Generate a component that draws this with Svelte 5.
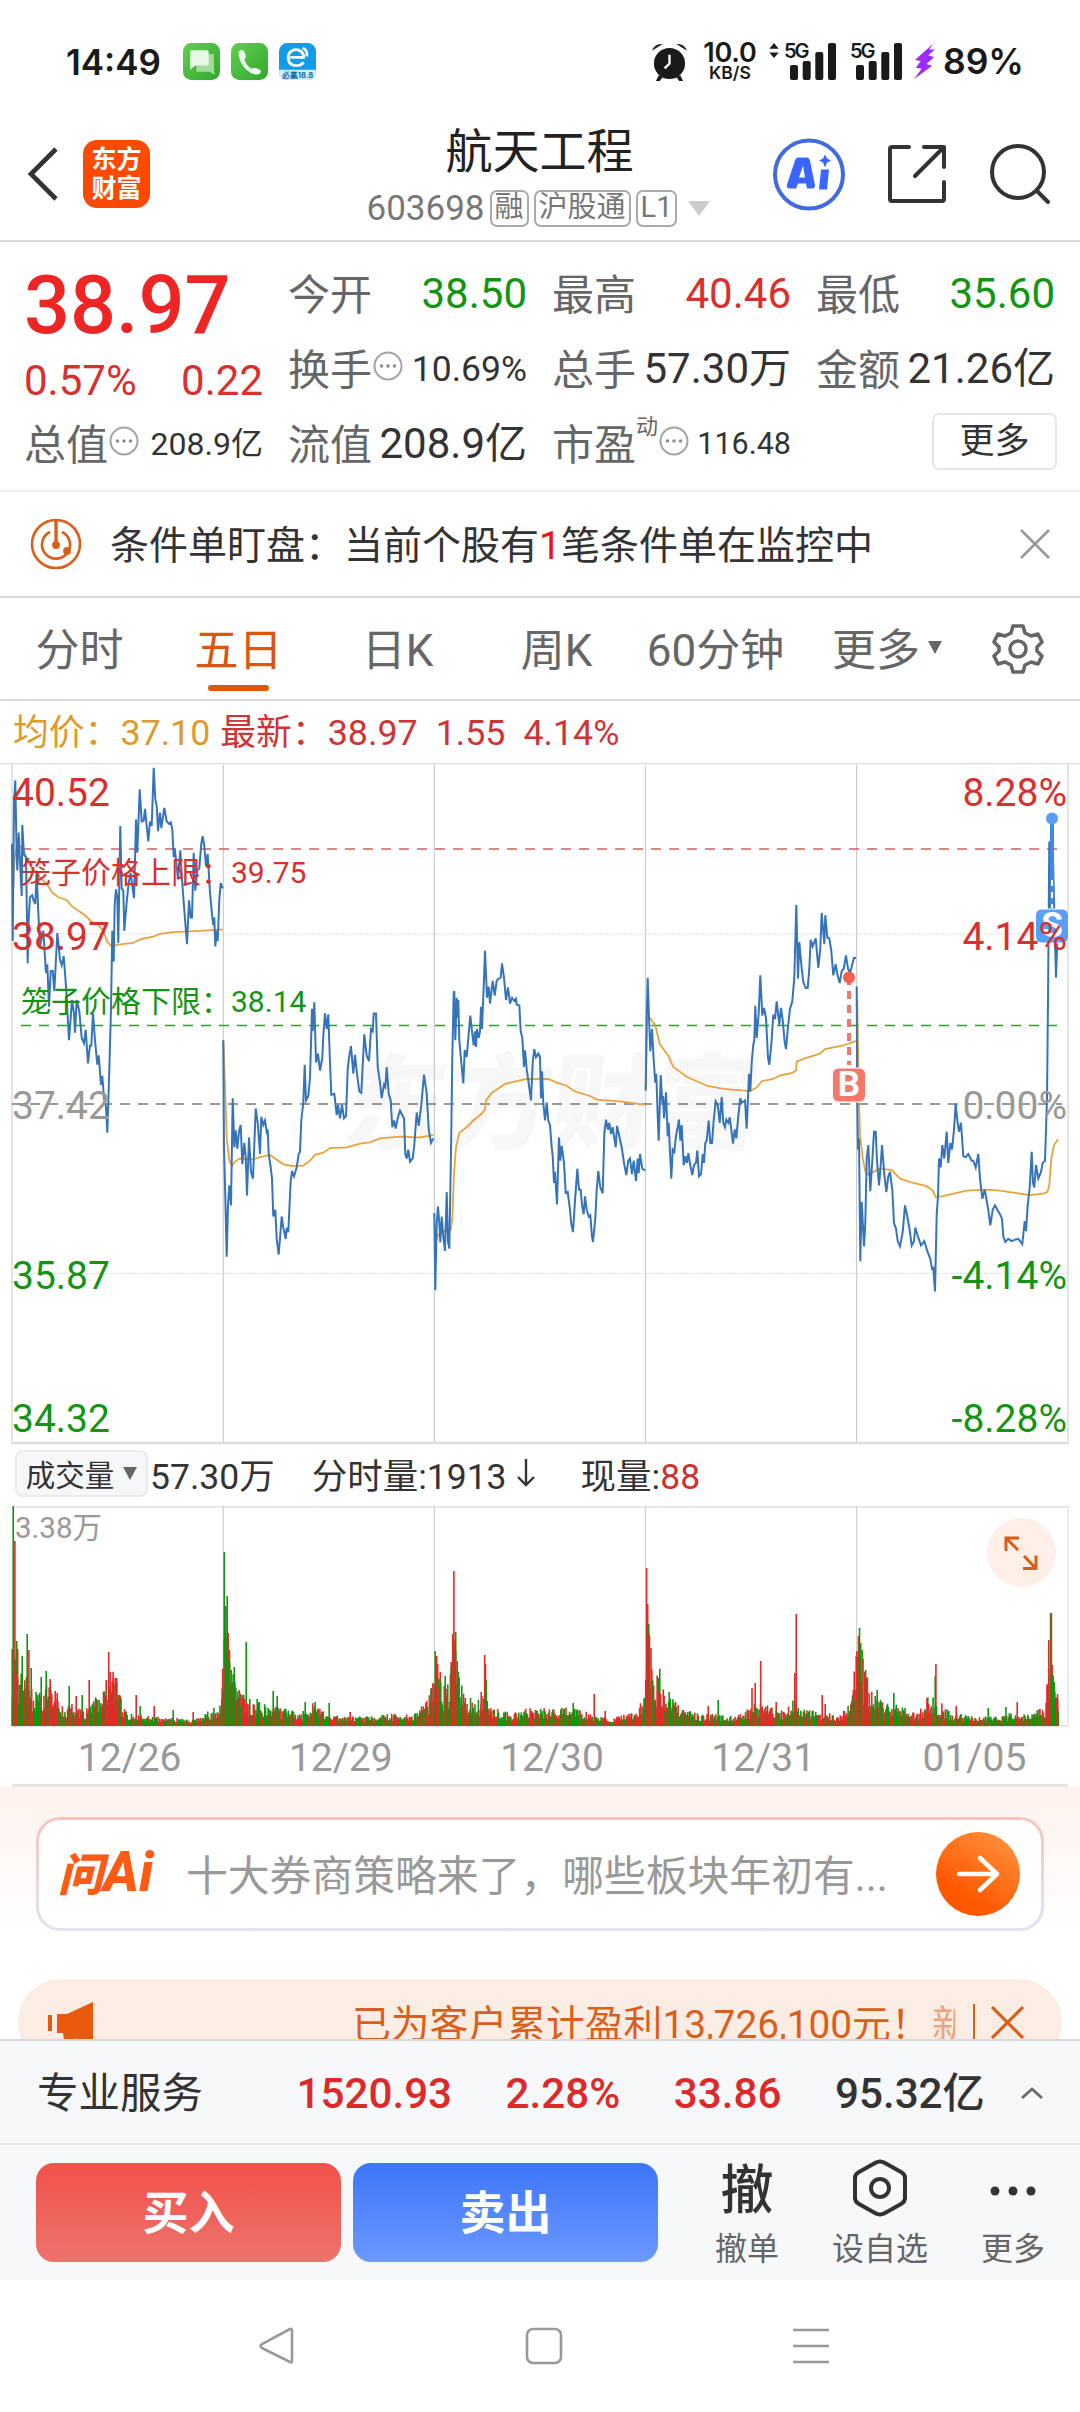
<script>
    // Every point is [x, y] on a 3 x 2.24 grid per screen pixel
    const days = [
        {
            offset: 0,
            price: '36,210 38,428 42,120 46,68 50,240 52,270 56,185 60,250 65,327 67,168 72,235 78,240 83,478 86,380 90,330 97,325 100,335 106,345 110,270 114,350 120,440 130,405 138,500 142,480 147,575 152,495 158,495 163,540 172,410 180,470 185,482 191,462 198,530 207,650 212,600 216,560 222,590 225,633 230,560 238,585 245,645 252,657 257,627 264,702 270,662 274,662 279,590 285,650 292,705 296,684 303,750 307,730 312,780 318,800 322,857 327,740 333,580 337,405 341,474 344,345 348,312 352,330 355,432 361,170 365,310 370,315 373,405 380,340 386,298 392,275 396,300 402,332 408,156 412,230 419,88 425,160 431,158 435,132 440,170 445,205 450,160 455,170 461,40 466,110 470,125 474,182 480,140 484,175 493,130 500,160 507,165 512,162 517,178 521,240 524,220 530,260 534,290 541,225 546,290 552,350 561,435 567,337 572,375 576,375 581,230 586,315 592,270 598,265 604,210 608,193 613,215 618,260 623,233 630,320 637,375 640,392 643,375 646,440 650,405 653,428 658,335 662,298 668,310',
            average: '40,310 44,240 50,220 60,215 72,228 82,245 95,265 110,275 125,290 140,300 155,318 175,330 200,336 215,350 235,360 255,370 275,385 295,392 310,405 322,430 335,440 355,436 400,432 425,423 460,418 480,412 520,408 600,405 668,402'
        },
        {
            offset: 0,
            price: '670,650 672,890 676,1000 680,1135 684,1020 688,975 693,1020 698,780 703,890 707,852 712,893 717,855 722,840 727,928 733,880 737,910 741,998 747,868 753,945 759,960 767,803 773,835 780,905 784,822 790,840 795,830 800,855 803,850 806,905 812,935 816,960 820,1045 826,1030 830,1095 836,1130 845,1045 850,1070 857,1095 860,1070 865,1080 872,965 876,943 882,955 890,935 896,905 900,900 904,830 910,790 914,705 918,785 925,775 930,735 936,580 938,630 943,565 948,700 954,680 960,718 967,690 970,640 975,590 980,625 985,592 990,700 994,772 1003,770 1010,818 1014,795 1020,825 1026,795 1032,825 1038,820 1043,715 1047,690 1053,663 1060,725 1065,683 1070,720 1078,765 1084,768 1093,637 1100,685 1107,697 1113,625 1118,630 1121,590 1128,590 1133,710 1140,745 1145,780 1152,750 1156,755 1160,710 1166,770 1172,785 1177,845 1182,830 1187,848 1193,825 1200,808 1212,825 1216,905 1220,915 1225,895 1230,922 1238,915 1243,885 1250,812 1256,842 1264,795 1272,727 1280,770 1286,850 1293,880 1300,870',
            average: '670,650 675,750 680,870 688,920 696,932 705,922 720,915 760,917 780,912 810,907 825,915 850,928 880,932 910,931 930,920 945,907 970,902 990,892 1040,890 1080,882 1110,879 1140,870 1200,866 1260,868 1300,862'
        },
        {
            offset: 1260,
            price: '43,1037 46,1210 50,1060 54,1023 58,1060 61,1103 65,1045 70,1090 75,1122 80,990 84,1100 88,1117 93,900 97,690 101,545 103,540 106,650 110,555 113,600 115,560 118,650 124,700 130,747 134,672 140,688 146,635 151,595 156,630 161,662 165,630 168,665 171,625 176,645 180,630 183,575 186,625 191,530 195,450 201,555 206,530 210,568 218,517 224,550 230,517 236,512 242,510 246,478 252,510 258,560 264,532 270,568 276,555 283,562 288,557 290,570 298,572 302,630 307,645 312,710 315,673 320,715 325,740 333,785 338,700 343,670 348,688 355,680 360,688 363,780 366,720 370,790 375,830 380,790 385,830 390,840 395,890 398,910 402,970 405,945 411,1018 417,868 421,920 425,887 432,925 437,992 443,990 450,1030 454,1062 459,1080 465,1010 472,938 477,985 482,985 486,1020 491,1040 495,1000 500,1030 506,1045 511,1042 516,1090 519,1102 526,1050 530,985 535,943 541,980 548,993 553,860 558,828 564,850 568,835 573,860 578,845 582,865 587,890 591,842 598,865 605,890 612,925 619,952 625,920 630,915 636,950 641,920 648,965 653,915 656,948 660,905 667,938 676,942',
            average: '46,1105 55,1085 75,1078 92,1075 97,1050 102,950 108,890 118,858 140,845 160,830 185,815 195,805 198,785 215,768 255,748 300,740 320,737 385,737 410,745 440,752 465,765 510,775 530,783 600,787 676,795'
        },
        {
            offset: 1260,
            price: '677,763 680,600 683,510 687,600 691,675 696,625 701,695 706,745 709,725 713,820 716,875 722,728 727,790 729,775 732,825 738,767 743,865 746,835 750,900 754,960 758,895 763,900 768,865 777,828 781,875 785,840 791,930 796,910 801,925 805,903 811,930 817,952 822,930 828,925 832,897 837,955 843,950 848,905 852,925 856,880 860,875 866,830 871,880 876,880 881,830 887,787 893,795 899,835 905,777 910,835 915,845 919,828 925,835 929,823 933,845 939,882 944,850 949,870 955,820 961,780 965,790 975,785 980,848 987,725 991,765 995,700 1000,660 1003,650 1006,573 1010,645 1016,590 1021,505 1027,595 1032,578 1038,600 1044,690 1048,705 1054,660 1060,593 1065,603 1070,563 1078,615 1083,578 1088,605 1094,655 1098,670 1104,620 1110,580 1117,563 1123,510 1129,347 1134,512 1138,430 1145,490 1150,520 1157,533 1163,533 1168,490 1172,425 1178,440 1187,422 1195,488 1201,445 1205,365 1209,400 1213,435 1216,370 1222,420 1228,422 1234,450 1240,505 1247,480 1252,502 1259,522 1265,495 1271,490 1278,460 1284,490 1290,500 1297,480 1302,466 1308,466',
            average: '677,763 681,600 690,600 705,615 720,660 745,685 760,710 800,732 860,752 910,759 990,764 1010,756 1025,742 1060,737 1080,729 1115,724 1128,718 1130,698 1150,692 1200,680 1215,670 1270,662 1308,652'
        },
        {
            offset: 2460,
            price: '110,530 112,790 114,895 117,870 121,1145 125,1012 132,1112 136,1060 140,915 145,885 151,988 157,920 162,855 167,855 171,920 177,975 182,930 186,885 193,950 199,990 205,955 210,945 217,985 222,1060 228,1072 233,1100 240,1112 248,1080 255,1020 263,1050 268,1070 275,1110 282,1100 286,1070 294,1090 303,1110 313,1100 323,1125 331,1140 336,1162 340,1160 345,1213 350,1040 354,1000 357,915 362,935 367,885 373,915 380,855 385,925 391,880 396,895 402,850 407,793 412,830 417,855 423,835 430,910 437,912 445,905 455,920 460,920 467,935 475,905 480,960 487,1005 494,985 500,1010 505,1030 511,1065 518,1030 525,1020 532,1030 540,1040 546,1050 550,1090 556,1102 565,1095 575,1100 585,1097 595,1095 600,1100 607,1107 614,1055 618,1078 623,1020 629,980 635,900 639,970 643,980 648,930 655,960 663,945 668,925 675,920 681,780 684,560 688,205 692,360 696,150 700,270 704,400 708,510 712,430',
            average: '112,560 116,760 120,860 128,915 136,943 145,951 160,945 180,938 215,941 240,960 280,970 320,977 338,987 347,1001 365,1000 410,992 440,987 500,985 540,987 630,997 670,994 682,990 688,975 694,915 702,885 714,872'
        }
    ];

    function toPoints(text, offset) {
        return text
            .split(' ')
            .map((pair) => {
                const [x, y] = pair.split(',').map(Number);
                return `${((x + offset) / 3).toFixed(1)},${(y / 2.24 - 13).toFixed(1)}`;
            })
            .join(' ');
    }

    const dayLines = [223.3, 434.4, 645.5, 856.6];

    // Usual bar height along the x axis, then the bars that stand out of it
    const envelope = [
        [12, 60], [20, 40], [30, 30], [45, 30], [55, 20], [65, 14], [75, 15], [85, 10], [95, 20], [105, 25], [112, 42],
        [118, 25], [125, 10], [135, 8], [150, 6], [170, 6], [190, 4], [200, 5], [212, 12], [220, 16], [224, 70], [230, 50],
        [236, 30], [245, 20], [255, 16], [270, 16], [285, 12], [300, 9], [315, 17], [325, 8], [350, 6], [370, 6], [390, 8],
        [400, 8], [415, 9], [425, 15], [433, 30], [438, 45], [442, 30], [448, 28], [454, 65], [458, 40], [463, 25], [475, 15],
        [485, 25], [495, 12], [510, 9], [530, 12], [555, 12], [575, 12], [590, 8], [610, 5], [635, 9], [645, 25], [648, 70],
        [655, 35], [660, 40], [670, 22], [680, 12], [700, 8], [735, 7], [755, 15], [765, 15], [775, 12], [785, 9], [793, 18],
        [800, 12], [820, 9], [840, 8], [852, 18], [858, 80], [863, 45], [870, 25], [885, 15], [900, 14], [915, 8], [930, 22],
        [938, 18], [950, 9], [975, 6], [1000, 6], [1015, 10], [1030, 7], [1045, 14], [1050, 55], [1055, 35], [1059, 15]
    ];
    const spikes = [
        [12, 77, 'r'], [13, 220, 'g'], [14.7, 185, 'r'], [16.5, 85, 'g'], [17.5, 77, 'r'], [22, 70, 'g'], [27, 92, 'g'],
        [28.7, 76, 'r'], [31, 58, 'g'], [41, 49, 'g'], [46, 55, 'g'], [50, 47, 'r'], [55, 35, 'r'], [57, 33, 'r'], [69, 40, 'g'],
        [76, 30, 'r'], [82, 31, 'g'], [89, 46, 'r'], [106, 46, 'r'], [108.5, 74, 'r'], [110, 54, 'r'], [113, 48, 'r'],
        [115, 48, 'r'], [116.5, 48, 'r'], [136, 31, 'r'], [140, 20, 'g'], [154, 20, 'r'], [173, 16, 'g'], [193, 14, 'r'],
        [222, 38, 'g'], [224, 174, 'g'], [225.5, 120, 'g'], [227, 130, 'g'], [228, 93, 'r'], [229.3, 76, 'r'], [231, 56, 'g'],
        [234, 59, 'g'], [246, 84, 'g'], [257, 27, 'g'], [273, 35, 'g'], [277, 30, 'g'], [305, 24, 'g'], [315, 24, 'g'],
        [329, 23, 'g'], [350, 14, 'r'], [431, 38, 'g'], [434, 42, 'r'], [435, 75, 'g'], [436.5, 70, 'r'], [437.5, 62, 'r'],
        [440, 54, 'r'], [445, 50, 'g'], [451, 64, 'r'], [452.5, 92, 'r'], [453.7, 155, 'r'], [455.5, 94, 'g'], [457, 65, 'r'],
        [458, 46, 'r'], [481, 34, 'r'], [484.5, 71, 'r'], [485.3, 62, 'r'], [486, 46, 'g'], [573, 23, 'g'], [594, 32, 'r'],
        [605, 15, 'r'], [646.4, 158, 'r'], [647.5, 122, 'r'], [648.5, 102, 'g'], [649.3, 90, 'r'], [658.5, 48, 'g'],
        [669, 34, 'g'], [708, 20, 'r'], [718, 26, 'g'], [751.8, 38, 'r'], [755, 43, 'r'], [760.5, 65, 'r'], [776, 24, 'r'],
        [794.6, 53, 'r'], [796, 112, 'r'], [822, 31, 'r'], [825, 22, 'r'], [856, 70, 'r'], [858.3, 90, 'r'], [859.3, 98, 'g'],
        [860.5, 83, 'g'], [862, 76, 'g'], [867, 38, 'r'], [877, 36, 'g'], [893.6, 33, 'g'], [935, 50, 'g'], [935.7, 62, 'r'],
        [956, 20, 'r'], [988, 18, 'g'], [1005.7, 19, 'g'], [1017, 24, 'r'], [1048.6, 86, 'r'], [1050.4, 113, 'g'],
        [1051.2, 113, 'r'], [1052.5, 48, 'g'], [1054, 44, 'g'], [1057.5, 26, 'r']
    ];

    let seed = 38;
    function random() {
        seed = (seed * 16807) % 2147483647;
        return seed / 2147483647;
    }

    function usualHeight(x) {
        const i = Math.max(1, envelope.findIndex((point) => point[0] >= x));
        const [x0, h0] = envelope[i - 1];
        const [x1, h1] = envelope[i];
        return h0 + ((h1 - h0) * (x - x0)) / (x1 - x0);
    }

    const bars = [];
    for (let x = 12.2; x < 1058.5; x += 0.876) {
        bars.push([x, 1 + usualHeight(x) * (0.45 + random()), random() > 0.5 ? 'r' : 'g']);
    }
    const volumeBars = [...bars, ...spikes].sort((a, b) => a[0] - b[0]);

    const tabs = [
        { name: '分时' },
        { name: '五日', active: true },
        { name: '日K' },
        { name: '周K' },
        { name: '60分钟' }
    ];

    const dates = ['12/26', '12/29', '12/30', '12/31', '01/05'];
</script>

{#snippet info()}
    <svg class="info" viewBox="0 0 30 30">
        <circle cx="15" cy="15" r="13.5" fill="none" stroke="#a3a3a3" stroke-width="2" />
        <circle cx="8.5" cy="15" r="1.8" fill="#8c8c8c" />
        <circle cx="15" cy="15" r="1.8" fill="#8c8c8c" />
        <circle cx="21.5" cy="15" r="1.8" fill="#8c8c8c" />
    </svg>
{/snippet}

{#snippet signal()}
    <svg class="signal" viewBox="0 0 46 37">
        <rect x="0" y="22" width="8" height="15" rx="2" />
        <rect x="12.7" y="18" width="8" height="19" rx="2" />
        <rect x="25.3" y="9" width="8" height="28" rx="2" />
        <rect x="38" y="0" width="8" height="37" rx="2" />
    </svg>
{/snippet}

<div class="screen">
    <div class="status">
        <span class="time">14:49</span>
        <svg class="app-icon" viewBox="0 0 36 36">
            <defs>
                <linearGradient id="green" x1="0" y1="0" x2="1" y2="1">
                    <stop offset="0" stop-color="#62cf50" />
                    <stop offset="1" stop-color="#31a82c" />
                </linearGradient>
            </defs>
            <rect width="36" height="36" rx="8" fill="url(#green)" />
            <path d="M13 11h17v15l1 5-5-3H13z" fill="#a4dd9b" />
            <path d="M8 7h15a2 2 0 0 1 2 2v11a2 2 0 0 1-2 2H12l-5 4V8z" fill="#e9f8e6" />
        </svg>
        <svg class="app-icon" viewBox="0 0 36 36">
            <rect width="36" height="36" rx="8" fill="url(#green)" />
            <path d="M9 7c3-1 4 1 5 4s0 4-1 5c1 4 4 7 7 9 2-1 3-1 6 0s4 3 2 5c-3 2-9 0-14-5S5 9 9 7z" fill="#eefaec" />
        </svg>
        <svg class="app-icon" viewBox="0 0 36 36">
            <rect width="36" height="36" rx="8" fill="#129be9" />
            <path d="M0 26h36v2a8 8 0 0 1-8 8H8a8 8 0 0 1-8-8z" fill="#cfeffd" />
            <path d="M11 14h13c0-10-15-10-15 0 0 9 10 10 15 5M23 5c3 1 5 4 4 8" fill="none" stroke="#fff" stroke-width="2.8" />
            <text x="18" y="34" text-anchor="middle" font-size="7.5" font-weight="700" fill="#1a6fae">必赢18.8</text>
        </svg>

        <svg class="alarm" viewBox="0 0 38 39">
            <circle cx="19" cy="21" r="16" />
            <path d="M1 8Q4 0 12 1zM37 8Q34 0 26 1zM8 33l-3 6h4l3-4zM30 33l3 6h-4l-3-4z" />
            <path d="M19 12v9l-5 5" fill="none" stroke="#fff" stroke-width="2.4" />
        </svg>
        <div class="speed"><b>10.0</b><span>KB/S</span></div>
        <svg class="updown" viewBox="0 0 10 16"><path d="M0 6 5 0l5 6zM0 10h10l-5 6z" /></svg>
        <div class="cell"><span>5G</span>{@render signal()}</div>
        <div class="cell second"><span>5G</span>{@render signal()}</div>
        <svg class="bolt" viewBox="0 0 22 37"><path d="M20 0 1 17l6 1-5 7 6 1L0 37l19-14-6-2 8-7-6-2 7-6h-6z" fill="#9d2bfa" /></svg>
        <span class="battery">89%</span>
    </div>

    <header class="nav">
        <svg class="back" viewBox="0 0 32 56"><path d="M29 3 4 28l25 25" fill="none" stroke="#333" stroke-width="4.6" /></svg>
        <div class="logo"><span>东方</span><span>财富</span></div>
        <div class="title">
            <h1>航天工程</h1>
            <div class="code">
                <span>603698</span>
                <i>融</i><i>沪股通</i><i>L1</i>
                <svg viewBox="0 0 22 15"><path d="M0 0h22L11 15z" fill="#ccc" /></svg>
            </div>
        </div>
        <svg class="ai" viewBox="0 0 72 72">
            <circle cx="36" cy="36" r="34" fill="none" stroke="#4169e1" stroke-width="4" />
            <path fill-rule="evenodd" d="M25 19h9q2 0 3 3l5 25q0 3-3 3h-5l-1-5h-8l-2 5h-6q-4 0-3-4l8-24q1-3 3-3zM30 27l-4 12h6z" fill="#3a66ff" />
            <path d="M48 31h8l-2 20h-8zM52 16l2 4 4 2-4 2-2 5-2-5-4-2 4-2z" fill="#3a66ff" />
        </svg>
        <svg class="share" viewBox="0 0 60 60" fill="none" stroke="#333" stroke-width="4" stroke-linecap="round" stroke-linejoin="round">
            <path d="M22 3H5Q3 3 3 5v50q0 2 2 2h50q2 0 2-2V38M37 3h20v20M57 3 28 32" />
        </svg>
        <svg class="search" viewBox="0 0 62 62" fill="none" stroke="#333" stroke-width="4" stroke-linecap="round">
            <circle cx="29" cy="29" r="26" /><path d="m48 48 11 11" />
        </svg>
    </header>

    <section class="quote">
        <div class="column">
            <div class="price">38.97</div>
            <div class="change"><span>0.57%</span><span>0.22</span></div>
            <div class="row"><label>总值</label>{@render info()}<b class="small">208.9亿</b></div>
        </div>
        <div class="column">
            <div class="row"><label>今开</label><b class="down">38.50</b></div>
            <div class="row"><label>换手</label>{@render info()}<b class="mid">10.69%</b></div>
            <div class="row"><label>流值</label><b>208.9亿</b></div>
        </div>
        <div class="column">
            <div class="row"><label>最高</label><b class="up">40.46</b></div>
            <div class="row"><label>总手</label><b>57.30万</b></div>
            <div class="row"><label>市盈<sup>动</sup></label>{@render info()}<b class="tiny">116.48</b></div>
        </div>
        <div class="column">
            <div class="row"><label>最低</label><b class="down">35.60</b></div>
            <div class="row"><label>金额</label><b>21.26亿</b></div>
            <div class="row"><button class="more">更多</button></div>
        </div>
    </section>

    <section class="alert">
        <svg class="radar" viewBox="0 0 52 52" fill="none" stroke="#d8601a" stroke-width="2.6">
            <circle cx="26" cy="26" r="24" />
            <path d="M20 14a14 14 0 1 0 12 0" />
            <path d="M26 3v24" stroke-width="3.4" />
            <circle cx="26" cy="27" r="2.6" fill="#d8601a" />
            <circle cx="37" cy="33" r="2.6" fill="#d8601a" />
        </svg>
        <p>条件单盯盘：当前个股有<em>1</em>笔条件单在监控中</p>
        <svg class="close" viewBox="0 0 30 30"><path d="m1 1 28 28M29 1 1 29" stroke="#999" stroke-width="2.6" /></svg>
    </section>

    <nav class="tabs">
        {#each tabs as tab}
            <span class:active={tab.active}>{tab.name}</span>
        {/each}
        <span class="menu">更多<svg viewBox="0 0 14 13"><path d="M0 0h14L7 13z" fill="#666" /></svg></span>
        <svg class="gear" viewBox="0 0 52 52" fill="none" stroke="#666" stroke-width="3.6" stroke-linejoin="round">
            <path d="M21 3h10l2 7 6 3 7-2 4 8-5 5v4l5 5-4 8-7-2-6 3-2 7H21l-2-7-6-3-7 2-4-8 5-5v-4l-5-5 4-8 7 2 6-3z" />
            <circle cx="26" cy="26" r="8" />
        </svg>
    </nav>

    <div class="latest">
        <span class="avg">均价：37.10</span>
        <span>最新：38.97</span>
        <span>1.55</span>
        <span>4.14%</span>
    </div>

    <svg class="chart" viewBox="0 0 1080 684">
        <text class="watermark" transform="translate(340 378) skewX(-6)" textLength="416">东方财富</text>
        <g stroke="#dcdcdc">
            <path d="M0 .5H1080" stroke-width="1.5" />
            <path d="M12 0V681M1068 0V681" stroke-width="2" stroke="#e3e3e3" />
            {#each dayLines as x}
                <path d="M{x} 2V680" stroke-width="1.2" stroke="#ccc" />
            {/each}
            <path d="M12 680H1068" stroke-width="2.4" />
            <path d="M12 171H1068M12 510.5H1068" stroke-dasharray="1.5 1.5" stroke="#d4d4d4" />
        </g>
        <g fill="none" stroke-dasharray="10 8" stroke-width="1.3">
            <path d="M21 86H1057" stroke="#d06060" />
            <path d="M21 262.5H1057" stroke="#2f9c2f" />
            <path d="M12 341H1062" stroke="#777" stroke-width="1.6" />
        </g>
        {#each days as day}
            <polyline points={toPoints(day.average, day.offset)} stroke="#e8a43c" stroke-width="1.8" fill="none" />
            <polyline points={toPoints(day.price, day.offset)} stroke="#3674b9" stroke-width="2" fill="none" />
        {/each}

        <g class="mark">
            <path d="M849 214v88" stroke="#f0776b" stroke-width="4" stroke-dasharray="8 6" />
            <circle cx="849" cy="214.5" r="6" fill="#f4604f" />
            <rect x="832.5" y="305" width="33" height="34" rx="6" fill="#f4796a" stroke="#fff" />
            <text x="849" y="333">B</text>
        </g>
        <g class="mark">
            <path d="M1052 60v86" stroke="#4088e8" stroke-width="4" />
            <path d="M1052 117v28" stroke="#fff" stroke-width="2" stroke-dasharray="6 6" />
            <circle cx="1052" cy="55.5" r="6" fill="#5a9df6" />
            <rect x="1035.5" y="146" width="33" height="34" rx="6" fill="#5a9ef8" stroke="#fff" />
            <text x="1052" y="174">S</text>
        </g>

        <g class="axis">
            <text x="12" y="43" class="up">40.52</text>
            <text x="12" y="187" class="up">38.97</text>
            <text x="12" y="356" class="flat">37.42</text>
            <text x="12" y="526" class="down">35.87</text>
            <text x="12" y="669" class="down">34.32</text>
        </g>
        <g class="axis" text-anchor="end">
            <text x="1067" y="43" class="up">8.28%</text>
            <text x="1067" y="187" class="up">4.14%</text>
            <text x="1067" y="356" class="flat">0.00%</text>
            <text x="1067" y="526" class="down">-4.14%</text>
            <text x="1067" y="669" class="down">-8.28%</text>
        </g>
        <g class="cage">
            <text x="21" y="120" class="up">笼子价格上限：39.75</text>
            <text x="21" y="249" class="down">笼子价格下限：38.14</text>
        </g>
    </svg>

    <div class="volume-head">
        <button>成交量<svg viewBox="0 0 14 13"><path d="M0 0h14L7 13z" fill="#666" /></svg></button>
        <span>57.30万</span>
        <span class="minute">分时量:1913<svg viewBox="0 0 20 30"><path d="M10 1v26M2 19l8 8 8-8" fill="none" stroke="#333" stroke-width="2.4" /></svg></span>
        <span>现量:<em>88</em></span>
    </div>

    <svg class="volume" viewBox="0 0 1080 222">
        <g stroke="#e2e2e2" stroke-width="1.4">
            <path d="M12 .7H1068M12 220H1068M1068 0V220" />
            {#each dayLines as x}
                <path d="M{x} 0V220" stroke="#d0d0d0" stroke-width="1.2" />
            {/each}
        </g>
        <text x="15" y="32">3.38万</text>
        {#each volumeBars as [x, height, side]}
            <rect x={x - 0.6} y={220 - height} width="1.6" {height} fill={side === 'r' ? '#e32a2a' : '#0f960f'} />
        {/each}
        <circle cx="1021.5" cy="46.5" r="34.5" fill="#fef0e8" />
        <path d="M1019 32h-13v13M1006.5 32.5 1018 44M1023 62.5h13v-13M1035.5 62 1024 50" fill="none" stroke="#d65e16" stroke-width="3" />
    </svg>

    <div class="dates">
        {#each dates as date}
            <span>{date}</span>
        {/each}
    </div>

    <section class="promo">
        <div class="ask">
            <div class="ask-logo"><span>问</span>Ai</div>
            <p>十大券商策略来了，哪些板块年初有...</p>
            <svg viewBox="0 0 84 84">
                <defs>
                    <linearGradient id="orange" x1=".9" y1="0" x2=".4" y2=".8">
                        <stop offset="0" stop-color="#ff9440" />
                        <stop offset="1" stop-color="#ff5800" />
                    </linearGradient>
                </defs>
                <circle cx="42" cy="42" r="42" fill="url(#orange)" />
                <path d="M23 42h38M44 26l17 16-17 16" fill="none" stroke="#fff" stroke-width="4.6" stroke-linecap="round" stroke-linejoin="round" />
            </svg>
        </div>
        <div class="banner">
            <svg class="horn" viewBox="0 0 46 40"><path d="M0 13h4v16H0zM9 12h10L45 0v40H31l-4-4-3 4-8-2-1-7H9z" fill="#e9590c" /></svg>
            <p>已为客户累计盈利13,726,100元！</p>
            <span class="next">新</span>
            <i></i>
            <svg class="cross" viewBox="0 0 32 32"><path d="m1 1 30 30M31 1 1 31" stroke="#d9601c" stroke-width="3" /></svg>
        </div>
    </section>

    <section class="index">
        <span class="name">专业服务</span>
        <b>1520.93</b>
        <b>2.28%</b>
        <b>33.86</b>
        <b class="dark">95.32亿</b>
        <svg viewBox="0 0 22 12"><path d="m1 11 10-9 10 9" fill="none" stroke="#666" stroke-width="2.6" /></svg>
    </section>

    <section class="actions">
        <button class="buy">买入</button>
        <button class="sell">卖出</button>
        <div class="tool"><strong>撤</strong><span>撤单</span></div>
        <div class="tool wide">
            <svg viewBox="0 0 54 58" fill="none" stroke="#333" stroke-width="4">
                <path d="M22 4q5-3 10 0l16 9q4 2 4 6v20q0 4-4 6l-16 9q-5 3-10 0L6 45q-4-2-4-6V19q0-4 4-6z" />
                <circle cx="27" cy="29" r="9" />
            </svg>
            <span>设自选</span>
        </div>
        <div class="tool">
            <svg viewBox="0 0 54 58" fill="#333"><circle cx="9" cy="32" r="4.5" /><circle cx="27" cy="32" r="4.5" /><circle cx="45" cy="32" r="4.5" /></svg>
            <span>更多</span>
        </div>
    </section>

    <div class="system">
        <svg viewBox="0 0 38 38"><path d="M34 4v30q0 2-2 1L4 21q-3-2 0-4L32 2q2-1 2 2z" /></svg>
        <svg viewBox="0 0 38 38"><rect x="2" y="2" width="34" height="34" rx="6" /></svg>
        <svg viewBox="0 0 38 38"><path d="M1 3h36M1 19h36M1 35h36" /></svg>
    </div>
</div>

<style>
    .screen {
        width: 1080px;
        height: 2412px;
        display: flex;
        flex-direction: column;
        overflow: hidden;
        background: #fff;
        color: #333;
        font-family: Roboto, "Noto Sans CJK SC", sans-serif;
    }

    .screen > * {
        flex: none;
        box-sizing: border-box;
    }

    svg {
        display: block;
        flex: none;
    }

    p, h1 {
        margin: 0;
        font-weight: 400;
    }

    em, i {
        font-style: normal;
    }

    button {
        font-family: inherit;
        padding: 0;
        border: 0;
    }

    .up { color: #d7302f; fill: #d7302f; }
    .down { color: #139413; fill: #139413; }
    .flat { fill: #999; }

    .status {
        height: 115px;
        padding: 8px 56px 0 66px;
        display: flex;
        align-items: center;
        font-family: Inter, sans-serif;
        font-weight: 600;
        color: #1a1a1a;
        fill: #1a1a1a;
    }

    .time {
        font-size: 35px;
        width: 117px;
        white-space: nowrap;
    }

    .app-icon {
        width: 37px;
        height: 37px;
        margin-right: 11px;
    }

    .alarm {
        width: 37px;
        height: 38px;
        margin-left: auto;
    }

    .speed {
        width: 56px;
        margin-left: 14px;
        display: flex;
        flex-direction: column;
        align-items: center;
        line-height: 1;
    }

    .speed b {
        font-size: 27px;
        font-weight: 600;
        line-height: 22px;
        letter-spacing: -.2px;
    }

    .speed span {
        font-size: 17.5px;
        line-height: 18px;
    }

    .updown {
        width: 10px;
        height: 15px;
        margin: 0 5px 22px 11px;
    }

    .cell {
        position: relative;
        width: 52px;
        height: 37px;
        display: flex;
        justify-content: flex-end;
    }

    .cell span {
        position: absolute;
        left: 0;
        top: -2px;
        font-size: 20px;
        line-height: 20px;
        letter-spacing: -2px;
    }

    .cell.second {
        margin-left: 14px;
    }

    .signal {
        width: 46px;
        height: 37px;
    }

    .bolt {
        width: 21px;
        height: 37px;
        margin: 0 8px 0 12px;
    }

    .battery {
        font-size: 35.5px;
    }

    .nav {
        height: 127px;
        border-bottom: 2px solid #d9d9d9;
        padding: 0 29px 0 27px;
        display: flex;
        align-items: center;
    }

    .nav > svg, .logo {
        margin-top: -7px;
    }

    .back {
        width: 32px;
        height: 56px;
    }

    .logo {
        width: 67px;
        height: 68px;
        margin-left: 24px;
        border-radius: 14px;
        background: #fc4a05;
        color: #fff;
        font-size: 25px;
        font-weight: 700;
        line-height: 29px;
        display: flex;
        flex-direction: column;
        align-items: center;
        justify-content: center;
    }

    .title {
        flex: 1;
        padding-left: 160px;
        display: flex;
        flex-direction: column;
        align-items: center;
    }

    h1 {
        font-size: 47px;
        line-height: 60px;
        color: #222;
        margin: -5px 4px 7px 0;
    }

    .code {
        display: flex;
        align-items: center;
        gap: 5px;
        font-size: 35px;
        line-height: 40px;
        color: #777;
        margin-right: 6px;
    }

    .code i {
        height: 37px;
        box-sizing: border-box;
        border: 2px solid #aaa;
        border-radius: 7px;
        padding: 0 3px;
        font-size: 29px;
        line-height: 31px;
    }

    .code svg {
        width: 22px;
        height: 15px;
        margin-left: 6px;
    }

    .ai { width: 72px; height: 73px; }
    .share { width: 60px; height: 60px; margin-left: 42px; }
    .search { width: 62px; height: 62px; margin-left: 42px; }

    .quote {
        height: 250px;
        border-bottom: 2px solid #eee;
        padding: 13px 25px 0 24px;
        display: grid;
        grid-template-columns: repeat(4, 239px);
        column-gap: 25px;
    }

    .price {
        height: 99px;
        line-height: 101px;
        font-size: 81px;
        font-weight: 500;
        color: #ee2525;
    }

    .change {
        height: 51px;
        line-height: 53px;
        font-size: 42px;
        color: #d7302f;
        display: flex;
        justify-content: space-between;
    }

    .row {
        height: 75px;
        display: flex;
        align-items: center;
        white-space: nowrap;
    }

    .row label {
        position: relative;
        font-size: 42px;
        color: #666;
        margin-top: -3px;
    }

    .row sup {
        font-size: 22px;
        line-height: 0;
        vertical-align: 26px;
    }

    .row b {
        font-weight: 400;
        font-size: 42px;
        line-height: 50px;
        margin: 2px 0 0 auto;
    }

    .row b.small { font-size: 32px; }
    .row b.tiny { font-size: 30.5px; }
    .row b.mid { font-size: 35.5px; }

    .info {
        width: 30px;
        height: 30px;
        margin: -4px 0 0 1px;
    }

    .more {
        width: 125px;
        height: 57px;
        margin: -2px -2px 0 auto;
        border: 2px solid #e6e6e6;
        border-radius: 7px;
        background: #fff;
        color: #333;
        font-size: 35px;
        line-height: 50px;
    }

    .alert {
        height: 106px;
        border-bottom: 2px solid #d9d9d9;
        padding: 0 30px;
        display: flex;
        align-items: center;
    }

    .radar { width: 52px; height: 52px; }

    .alert p {
        font-size: 39px;
        margin: -4px 0 0 28px;
    }

    .alert em { color: #f01414; }

    .close {
        width: 30px;
        height: 30px;
        margin-left: auto;
    }

    .tabs {
        height: 103px;
        border-bottom: 2px solid #d9d9d9;
        display: flex;
        align-items: center;
        font-size: 44px;
        color: #666;
    }

    .tabs span {
        position: relative;
        width: 159px;
        margin-top: -3px;
        text-align: center;
    }

    .tabs .active {
        color: #de560d;
    }

    .tabs .active::after {
        content: "";
        position: absolute;
        left: 49px;
        bottom: -12px;
        width: 61px;
        height: 6px;
        border-radius: 3px;
        background: #e0570c;
    }

    .tabs .menu {
        width: 184px;
        display: flex;
        align-items: center;
        justify-content: center;
    }

    .menu svg {
        width: 14px;
        height: 13px;
        margin-left: 8px;
    }

    .gear { width: 52px; height: 52px; margin-left: 13px; }

    .latest {
        height: 62px;
        padding: 2px 0 0 13px;
        display: flex;
        align-items: baseline;
        font-size: 35.8px;
        color: #cf3434;
    }

    .latest span { margin-right: 18px; }
    .latest .avg { color: #e0992b; margin-right: 10px; }

    .chart {
        width: 1080px;
        height: 684px;
    }

    .watermark {
        font-size: 104px;
        font-weight: 900;
        fill: #f7f7f8;
    }

    .axis { font-size: 39px; }
    .cage { font-size: 30px; }

    .mark text {
        font-size: 35px;
        font-weight: 700;
        text-anchor: middle;
        fill: #fff;
    }

    .volume-head {
        height: 59px;
        padding: 0 0 7px 15px;
        display: flex;
        align-items: center;
        font-size: 35.5px;
        white-space: nowrap;
    }

    .volume-head button {
        width: 133px;
        height: 47px;
        box-sizing: border-box;
        border: 2px solid #e9eaec;
        border-radius: 8px;
        background: #f6f7f9;
        display: flex;
        align-items: center;
        justify-content: center;
        gap: 9px;
        color: #333;
        font-size: 29.5px;
        margin-right: 2px;
    }

    .volume-head button svg {
        width: 14px;
        height: 13px;
    }

    .minute {
        display: flex;
        align-items: center;
        margin: 0 45px 0 37px;
    }

    .minute svg {
        width: 20px;
        height: 30px;
        margin-left: 9px;
    }

    .volume-head em { color: #cf3030; }

    .volume {
        width: 1080px;
        height: 222px;
    }

    .volume text {
        font-size: 29.5px;
        fill: #999;
    }

    .dates {
        height: 59px;
        padding-top: 4px;
        margin: 0 12px;
        border-bottom: 3px solid #e5e5e5;
        display: flex;
        align-items: center;
        font-size: 39px;
        color: #999;
    }

    .dates span {
        flex: 1;
        padding-left: 24px;
        text-align: center;
    }

    .promo {
        height: 252px;
        overflow: hidden;
        padding: 30px 18px 0;
        background: linear-gradient(#fef2ee, #fff 150px);
    }

    .ask {
        height: 114px;
        box-sizing: border-box;
        margin: 0 18px;
        padding: 0 21px 1px 19px;
        border: 3px solid transparent;
        border-radius: 24px;
        background: linear-gradient(#fff, #fff) padding-box, linear-gradient(#f4c6bc, #dfe5f1) border-box;
        display: flex;
        align-items: center;
    }

    .ask-logo {
        width: 128px;
        white-space: nowrap;
        font-size: 55px;
        font-weight: 800;
        font-style: italic;
        color: #fb5b12;
        line-height: 70px;
        margin-top: 1px;
    }

    .ask-logo span {
        font-size: 45px;
        font-weight: 900;
    }

    .ask p {
        font-size: 41.8px;
        color: #999;
        white-space: nowrap;
        margin-top: -2px;
    }

    .ask svg {
        width: 84px;
        height: 84px;
        margin-left: auto;
    }

    .banner {
        height: 86px;
        margin-top: 48px;
        padding: 0 38px 0 30px;
        border-radius: 43px;
        background: #fcede4;
        color: #d9601c;
        display: flex;
        align-items: center;
        font-size: 38.8px;
        white-space: nowrap;
    }

    .horn {
        width: 46px;
        height: 40px;
    }

    .banner p, .next {
        margin-top: -3px;
    }

    .banner p { margin-left: 258px; }

    .next {
        width: 23px;
        overflow: hidden;
        margin-left: auto;
        opacity: .5;
    }

    .banner i {
        width: 2px;
        height: 36px;
        margin: 0 16px 0 18px;
        background: #d9601c;
    }

    .cross {
        width: 33px;
        height: 33px;
    }

    .index {
        height: 106px;
        border-top: 2px solid #d8dadd;
        border-bottom: 2px solid #e4e6e9;
        background: #f7f8fa;
        padding: 2px 37px 0 37px;
        display: flex;
        align-items: baseline;
        gap: 53.5px;
        font-size: 42.2px;
        line-height: 102px;
        white-space: nowrap;
    }

    .index .name {
        margin-right: 40px;
        font-size: 41.5px;
    }

    .index b {
        font-weight: 500;
        color: #dc2a2a;
    }

    .index .dark {
        color: #333;
        margin-right: -40px;
    }

    .index svg {
        width: 22px;
        height: 12px;
        margin-left: auto;
        align-self: center;
    }

    .actions {
        height: 135px;
        background: #f7f8fa;
        padding-left: 36px;
        display: flex;
        align-items: center;
    }

    .actions button {
        flex: none;
        width: 305px;
        height: 99px;
        border-radius: 18px;
        color: #fff;
        font-size: 46px;
        font-weight: 700;
        line-height: 98px;
    }

    .buy { background: linear-gradient(#f2514b, #ec736d); }

    .sell {
        margin: 0 22px 0 12px;
        background: linear-gradient(#3c76f8, #6c98ff);
    }

    .tool {
        flex: none;
        width: 134px;
        display: flex;
        flex-direction: column;
        align-items: center;
        font-size: 32px;
        line-height: 44px;
        color: #666;
    }

    .tool.wide { width: 132px; }

    .tool strong {
        font-size: 53px;
        font-weight: 500;
        line-height: 58px;
        margin: 7px 0;
        color: #333;
    }

    .tool svg {
        width: 54px;
        height: 58px;
        margin: 4px 0 10px;
    }

    .system {
        height: 132px;
        padding: 0 250px 0 258px;
        display: flex;
        align-items: center;
        justify-content: space-between;
    }

    .system svg {
        width: 38px;
        height: 38px;
        fill: none;
        stroke: #999;
        stroke-width: 2.6;
    }
</style>
